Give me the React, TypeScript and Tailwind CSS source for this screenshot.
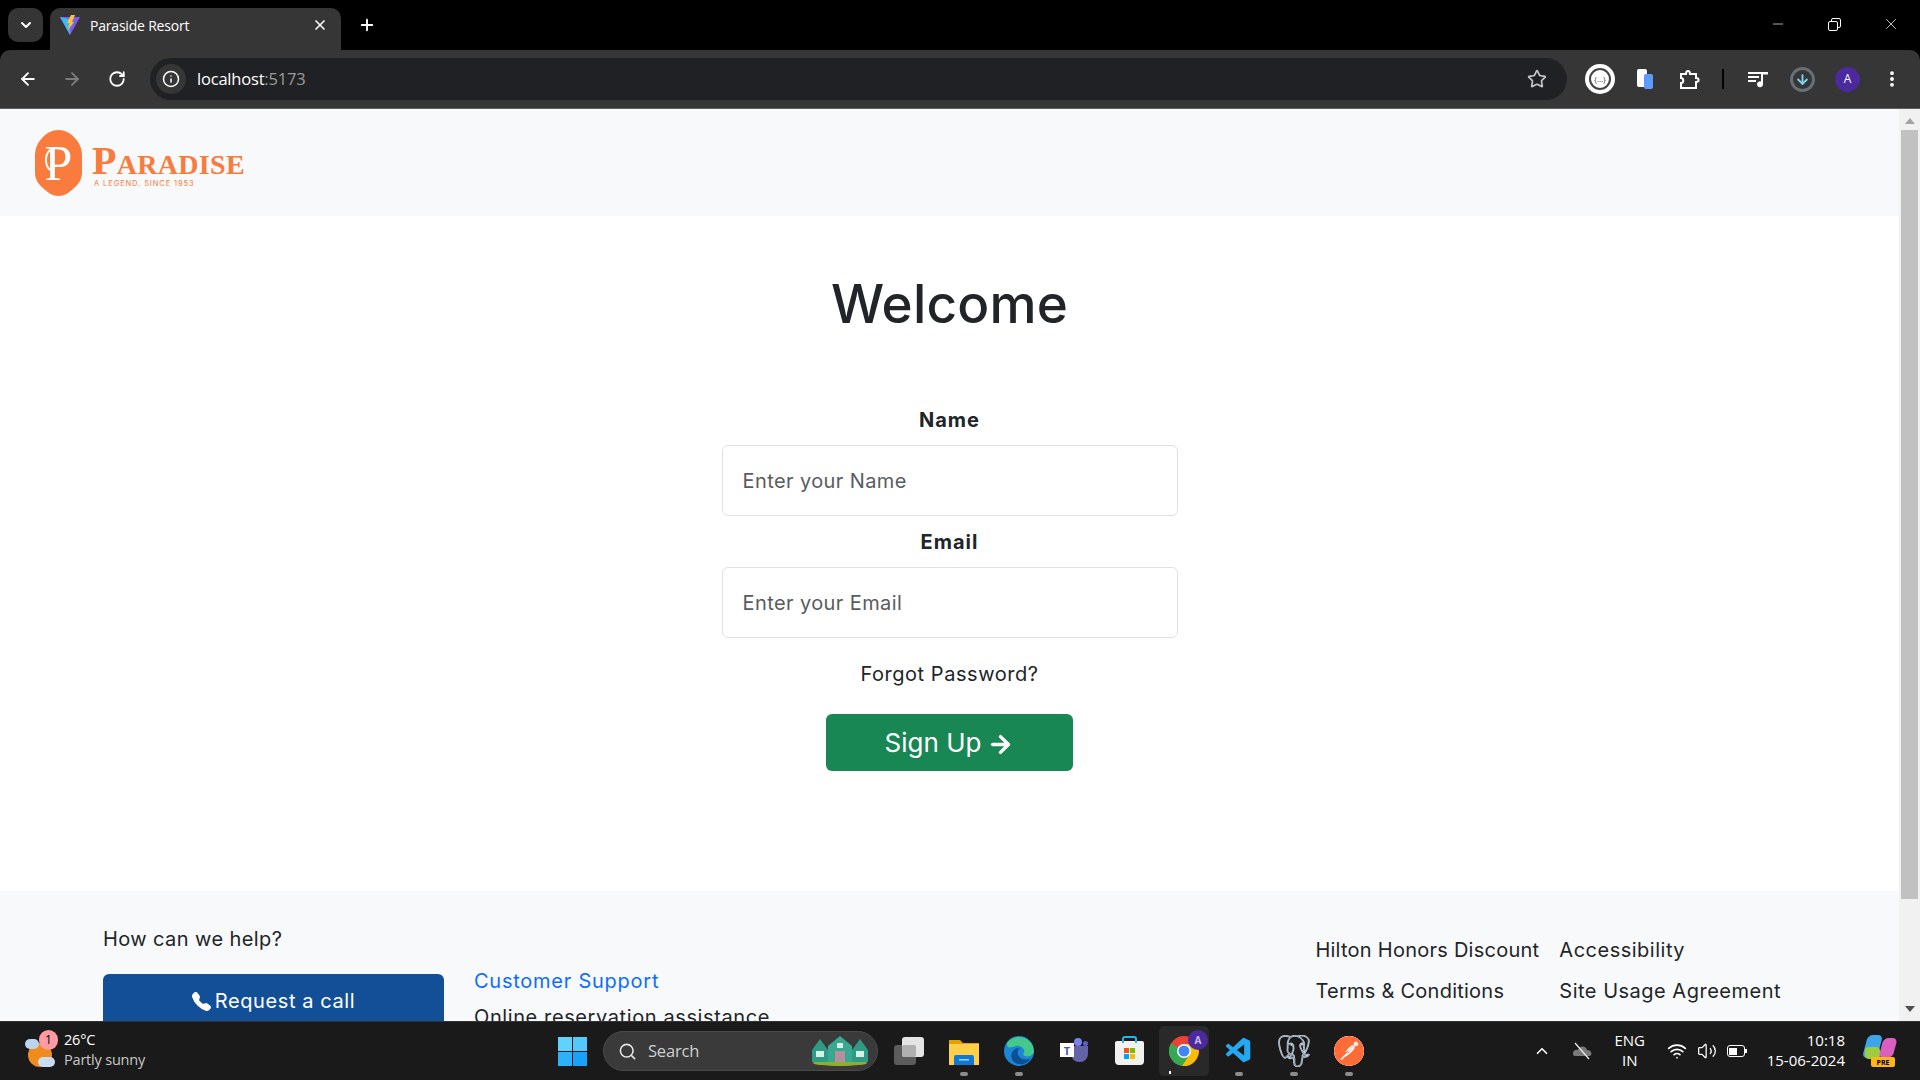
import { ArrowLeft, ArrowRight, ChevronDown, ChevronUp, EllipsisVertical, Info, Minus, Plus, RotateCw, Search, Star, Volume2, Wifi, X } from 'lucide-react';
import { BsTelephoneFill } from 'react-icons/bs';
import { SiPostgresql, SiPostman } from 'react-icons/si';
import { VscVscode } from 'react-icons/vsc';

const UI_FONT = "font-['Open_Sans','Noto_Sans',sans-serif]";

function ViteIcon() {
  return (
    <svg width="20" height="20" viewBox="0 0 20 20">
      <path d="M0 2 L20 2 L10 20 Z" fill="#7c5cf5" />
      <path d="M0 2 L9 4 L10 20 Z" fill="#41b6f5" />
      <path d="M11 0 L15 0 L12 7 L14 7 L8 15 L9.5 8 L7 8 Z" fill="#ffc62e" />
    </svg>
  );
}

function BrowserChrome() {
  return (
    <div className={'shrink-0 bg-black text-white ' + UI_FONT}>
      {/* Tab strip */}
      <div className="flex h-[50px] items-end pl-2">
        <div className="mb-2 flex h-[34px] w-[35px] items-center justify-center rounded-[10px] bg-[#353535]">
          <ChevronDown size={16} strokeWidth={3} />
        </div>
        <div className="ml-[7px] flex h-[42px] w-[291px] items-center rounded-t-[10px] bg-[#363636] pb-[8px] pl-[10px] pr-[13px]">
          <ViteIcon />
          <span className="ml-[10px] flex-1 text-[14px] tracking-[-0.2px]">Paraside Resort</span>
          <X size={16} strokeWidth={2.5} />
        </div>
        <div className="mb-[7px] ml-[8px] flex h-[36px] w-[36px] items-center justify-center">
          <Plus size={18} strokeWidth={2.5} />
        </div>
        <div className="mb-[8px] ml-auto flex h-[36px] items-center pr-[20px]">
          <Minus size={16} strokeWidth={1} />
          <div className="relative ml-[42px] h-[12px] w-[12px]">
            <div className="absolute left-[3px] top-0 h-[10px] w-[10px] rounded-[2px] border border-white" />
            <div className="absolute bottom-[-1px] left-0 h-[10px] w-[10px] rounded-[2px] border border-white bg-black" />
          </div>
          <X size={18} strokeWidth={1} className="ml-[42px]" />
        </div>
      </div>
      {/* Toolbar */}
      <div className="flex h-[59px] items-center rounded-t-[10px] border-b border-[#5f5f5f] bg-[#363636] pl-[18px]">
        <ArrowLeft size={20} strokeWidth={2.2} />
        <ArrowRight size={20} strokeWidth={2.2} className="ml-[24px] text-[#7d7d7d]" />
        <RotateCw size={18} strokeWidth={2.4} className="ml-[26px]" />
        <div className="ml-[24px] flex h-[42px] w-[1417px] items-center rounded-full bg-[#202124] pl-[6px] pr-[20px]">
          <div className="flex h-[30px] w-[30px] items-center justify-center rounded-full bg-[#363636]">
            <Info size={18} strokeWidth={2} />
          </div>
          <span className="ml-[11px] flex-1 text-[16.5px] tracking-[-0.2px]">
            localhost<span className="text-[#9a9a9a]">:5173</span>
          </span>
          <Star size={20} strokeWidth={2} className="text-[#c7c7c7]" />
        </div>
        <div className="ml-[18px] flex h-[30px] w-[30px] items-center justify-center rounded-full bg-white">
          <div className="flex h-[22px] w-[22px] items-center justify-center rounded-full border-2 border-[#444] text-[8px] leading-none text-[#444]">{'{…}'}</div>
        </div>
        <div className="relative ml-[22px] h-[20px] w-[16px]">
          <div className="absolute left-0 top-0 h-[18px] w-[10px] rounded-[2px] bg-white" />
          <div className="absolute bottom-0 right-0 h-[15px] w-[9px] rounded-[2px] bg-[#5e9bff]" />
        </div>
        <svg className="ml-[25px]" width="22" height="22" viewBox="0 0 22 22" fill="none" stroke="#fff" strokeWidth="2">
          <path d="M3 6 H8 C8 2 12 2 12 6 H18 V10 C21.5 10 21.5 14 18 14 V20 H3 V15 C6 15 6 10 3 10 Z" />
        </svg>
        <div className="ml-[22px] h-[20px] w-[2px] bg-black" />
        <svg className="ml-[24px]" width="20" height="20" viewBox="0 0 20 20" fill="#fff">
          <path d="M0 3 H13 V5 H0 Z M0 7 H11 V9 H0 Z M0 11 H8 V13 H0 Z" />
          <path d="M13 3 H20 V5.5 H15 V15 A3 3 0 1 1 13 12.5 Z" />
        </svg>
        <div className="ml-[22px] flex h-[25px] w-[25px] items-center justify-center rounded-full border-[3px] border-[#667078]">
          <ArrowRight size={15} strokeWidth={3} className="rotate-90 text-[#7fd3ec]" />
        </div>
        <div className="ml-[20px] flex h-[25px] w-[25px] items-center justify-center rounded-full bg-[#4a2a9c] text-[12px]">A</div>
        <EllipsisVertical size={20} strokeWidth={2.6} className="ml-[22px]" />
      </div>
    </div>
  );
}

function Logo() {
  return (
    <div className="flex items-center">
      <div className="relative flex h-[66px] w-[47px] items-center justify-center">
        <svg className="absolute inset-0" width="47" height="66" viewBox="0 0 47 66">
          <path d="M23.5 0 C30 0 35 3 39 7 C44 12 47 18 47 26 V42 C47 49 44 54 39 58 C34 63 29 66 23.5 66 C18 66 13 63 8 58 C3 54 0 49 0 42 V26 C0 18 3 12 8 7 C12 3 17 0 23.5 0 Z" fill="#f97b3d" />
          <path d="M15 20 A9 12 0 0 0 15 40" fill="none" stroke="#fff" strokeWidth="2" />
        </svg>
        <span className="relative font-['Liberation_Serif',serif] text-[50px] leading-none text-white">P</span>
      </div>
      <div className="ml-[10px] mt-[6px] flex flex-col text-[#f97b3d]">
        <span className="font-['Liberation_Serif',serif] text-[40px] font-bold leading-[36px] tracking-[0.3px] [font-variant:small-caps]">Paradise</span>
        <span className="ml-[2px] font-['Inter',sans-serif] text-[7.5px] leading-[10px] tracking-[0.9px]">A LEGEND. SINCE 1953</span>
      </div>
    </div>
  );
}

function Field({ label, placeholder }: { label: string; placeholder: string }) {
  return (
    <div className="flex w-[456px] flex-col items-center">
      <label className="mb-[10px] text-[20px] font-bold leading-[30px] tracking-[1px] text-[#212529]">{label}</label>
      <input
        placeholder={placeholder}
        className="h-[71px] w-full rounded-[6px] border border-[#dee2e6] bg-white px-[20px] text-[20px] tracking-[0.4px] text-[#212529] placeholder:text-[#595c5f]"
      />
    </div>
  );
}

function FooterLink({ children, className }: { children: string; className: string }) {
  return <a className={'text-[20px] leading-[30px] text-[#212529] ' + className}>{children}</a>;
}

function Page() {
  return (
    <div className="flex min-h-0 flex-1 bg-white">
      <div className="min-w-0 flex-1 overflow-hidden font-['Inter',sans-serif] text-[#212529]">
        <header className="flex h-[107px] items-center bg-[#f8f9fa] pl-[35px]">
          <Logo />
        </header>
        <main className="flex h-[675px] flex-col items-center">
          <h1 className="mt-[48px] text-[53px] font-medium leading-[80px] tracking-[0.2px]">Welcome</h1>
          <div className="mt-[61px] flex flex-col items-center">
            <Field label="Name" placeholder="Enter your Name" />
            <div className="mt-[11px]">
              <Field label="Email" placeholder="Enter your Email" />
            </div>
          </div>
          <a className="mt-[21px] text-[20px] leading-[30px] tracking-[0.55px]">Forgot Password?</a>
          <button className="mt-[25px] flex h-[57px] w-[247px] items-center justify-center gap-[6px] rounded-[6px] bg-[#198754] text-[26px] text-white">
            Sign Up
            <ArrowRight size={27} strokeWidth={3} className="mt-[3px]" />
          </button>
        </main>
        <footer className="flex h-[200px] bg-[#f8f9fa] pl-[103px] pr-[118px] pt-[33px]">
          <div className="w-[341px]">
            <p className="text-[20px] leading-[30px] tracking-[0.4px]">How can we help?</p>
            <button className="mt-[20px] flex h-[58px] w-[341px] items-center justify-center gap-[4px] rounded-[6px] bg-[#134f97] pb-[4px] text-[20px] tracking-[0.6px] text-white">
              <BsTelephoneFill size={19} />
              Request a call
            </button>
          </div>
          <div className="ml-[30px] pt-[42px]">
            <a className="block text-[20px] leading-[30px] tracking-[0.75px] text-[#0d6efd]">Customer Support</a>
            <p className="mt-[6px] text-[20px] leading-[30px] tracking-[0.6px]">Online reservation assistance</p>
          </div>
          <div className="ml-auto grid grid-cols-[auto_auto] content-start gap-x-[20px] gap-y-[11px] pt-[11px]">
            <FooterLink className="tracking-[0.25px]">Hilton Honors Discount</FooterLink>
            <FooterLink className="tracking-[0.5px]">Accessibility</FooterLink>
            <FooterLink className="tracking-[0.25px]">Terms & Conditions</FooterLink>
            <FooterLink className="tracking-[0.5px]">Site Usage Agreement</FooterLink>
          </div>
        </footer>
      </div>
      {/* Scrollbar */}
      <div className="flex w-[21px] shrink-0 flex-col items-center bg-[#f1f1f1]">
        <div className="mt-[9px] h-0 w-0 border-x-[5px] border-b-[6px] border-x-transparent border-b-[#a3a3a3]" />
        <div className="mt-[6px] h-[769px] w-[17px] bg-[#c1c1c1]" />
        <div className="mt-auto mb-[9px] h-0 w-0 border-x-[5px] border-t-[6px] border-x-transparent border-t-[#505050]" />
      </div>
    </div>
  );
}

function ChromeIcon() {
  return (
    <svg width="30" height="30" viewBox="0 0 30 30">
      <circle cx="15" cy="15" r="15" fill="#ea4335" />
      <path d="M15 15 L2 7.5 A15 15 0 0 0 15 30 L21 19 Z" fill="#34a853" />
      <path d="M15 8 H28 A15 15 0 0 1 13 30 L21 18 Z" fill="#fbbc04" />
      <circle cx="15" cy="15" r="7" fill="#fff" />
      <circle cx="15" cy="15" r="5.5" fill="#4285f4" />
    </svg>
  );
}

function TaskbarItem({ running, children, className }: { running?: boolean; children: React.ReactNode; className?: string }) {
  return (
    <div className={'relative flex h-[50px] w-[50px] items-center justify-center rounded-[5px] ' + (className ?? '')}>
      {children}
      {running && <div className="absolute bottom-0 h-[4px] w-[8px] rounded-full bg-[#8c8c8c]" />}
    </div>
  );
}

function Taskbar() {
  return (
    <div className={'flex h-[59px] shrink-0 items-center border-t border-[#333] bg-[#1a1a1a] text-white ' + UI_FONT}>
      {/* Weather */}
      <div className="flex w-[558px] items-center pl-[25px]">
        <div className="relative h-[36px] w-[32px]">
          <div className="absolute left-[3px] top-[10px] h-[24px] w-[24px] rounded-full bg-[#f08c1e]" />
          <div className="absolute left-0 top-[6px] h-[10px] w-[14px] rounded-full bg-[#bcd5ee]" />
          <div className="absolute bottom-[2px] left-[13px] h-[10px] w-[17px] rounded-full bg-[#c9dcf2]" />
          <div className="absolute left-[14px] top-[-3px] flex h-[20px] w-[19px] items-center justify-center rounded-full bg-[#ff9aa2] text-[12px] text-black">1</div>
        </div>
        <div className="mb-[2px] ml-[7px] flex flex-col text-[14.5px] leading-[20px] tracking-[-0.2px]">
          <span>26°C</span>
          <span className="text-[#c9c9c9]">Partly sunny</span>
        </div>
      </div>
      {/* Start + search */}
      <div className="grid h-[29px] w-[29px] shrink-0 grid-cols-2 gap-[1px]">
        <div className="bg-[#5fd3fb]" />
        <div className="bg-[#54c8fb]" />
        <div className="bg-[#2eb0fb]" />
        <div className="bg-[#18a2fb]" />
      </div>
      <div className="ml-[16px] flex h-[40px] w-[275px] shrink-0 items-center rounded-full border border-[#4a4a4a] bg-[#3a3a3a] pl-[14px] pr-[8px]">
        <Search size={19} strokeWidth={2} className="text-[#e6e6e6]" />
        <span className="ml-[11px] flex-1 text-[16.5px] tracking-[-0.2px] text-[#d0d0d0]">Search</span>
        <svg width="58" height="30" viewBox="0 0 58 30">
          <ellipse cx="29" cy="27" rx="27" ry="3" fill="#8fae2e" />
          <path d="M1 26 V14 L9 3 L17 14 V26 Z M41 26 V14 L49 3 L57 14 V26 Z" fill="#2f9b84" />
          <path d="M17 26 V10 L29 0 L41 10 V26 Z" fill="#39a890" />
          <path d="M24 26 V15 H34 V26 Z" fill="#b78f9a" />
          <path d="M5 15 H13 V21 H5 Z M45 15 H53 V21 H45 Z M26 7 H32 V12 H26 Z" fill="#d8efe8" />
        </svg>
      </div>
      <div className="ml-[6px] flex items-center gap-[5px]">
        <TaskbarItem>
          <div className="relative h-[28px] w-[30px]">
            <div className="absolute bottom-0 left-0 h-[20px] w-[22px] rounded-[3px] bg-[#5c5c5c]" />
            <div className="absolute left-[8px] top-0 h-[20px] w-[22px] rounded-[3px] bg-[#e4e4e4]" />
            <div className="absolute bottom-[8px] left-[8px] h-[12px] w-[14px] rounded-[2px] bg-[#b0b0b0]" />
          </div>
        </TaskbarItem>
        <TaskbarItem running>
          <svg width="30" height="27" viewBox="0 0 30 27">
            <path d="M0 2 H11 L14 5 H30 V27 H0 Z" fill="#e3a008" />
            <path d="M0 6 H30 V27 H0 Z" fill="#ffcf4a" />
            <path d="M5 27 V19 Q5 17 7 17 H23 Q25 17 25 19 V27 Z" fill="#0f78d4" />
            <rect x="10" y="21" width="10" height="1.5" fill="#9fd5ff" />
          </svg>
        </TaskbarItem>
        <TaskbarItem running>
          <svg width="30" height="30" viewBox="0 0 30 30">
            <circle cx="15" cy="15" r="15" fill="#1b86d6" />
            <path d="M3 7 A15 15 0 0 1 30 15 C30 21 20 22 19 18 C23 14 17 9 12 10 C7 11 3 14 3 7 Z" fill="#45c98a" />
            <path d="M10 26 C4 20 9 11 16 12 C13 14 12 21 19 23 C23 24 26 23 27 22 C23 29 15 30 10 26 Z" fill="#0c4f94" />
          </svg>
        </TaskbarItem>
        <TaskbarItem>
          <div className="relative h-[26px] w-[28px]">
            <div className="absolute right-0 top-[8px] h-[16px] w-[17px] rounded-b-[8px] bg-[#6264a7]" />
            <div className="absolute right-[6px] top-0 h-[8px] w-[8px] rounded-full bg-[#7b83eb]" />
            <div className="absolute right-0 top-[3px] h-[5px] w-[5px] rounded-full bg-[#5b5fc7]" />
            <div className="absolute left-0 top-[5px] flex h-[14px] w-[14px] items-center justify-center bg-white text-[11px] font-bold leading-none text-[#4b53bc]">T</div>
          </div>
        </TaskbarItem>
        <TaskbarItem>
          <div className="relative mt-[3px] h-[24px] w-[29px] rounded-b-[4px] rounded-t-[2px] bg-[#f1f1f1]">
            <div className="absolute left-[7px] top-[-5px] h-[7px] w-[15px] rounded-t-[3px] border-x-2 border-t-2 border-[#27b5e8]" />
            <div className="absolute left-[9px] top-[7px] grid h-[11px] w-[11px] grid-cols-2 gap-[1px]">
              <div className="bg-[#f25022]" />
              <div className="bg-[#7fba00]" />
              <div className="bg-[#00a4ef]" />
              <div className="bg-[#ffb900]" />
            </div>
          </div>
        </TaskbarItem>
        <TaskbarItem className="bg-[#292929]">
          <ChromeIcon />
          <div className="absolute right-[1px] top-[4px] flex h-[20px] w-[20px] items-center justify-center rounded-full bg-[#4a2a9c] text-[10px] font-bold text-[#c9b8f0]">A</div>
          <div className="absolute bottom-[2px] left-[10px] h-[3px] w-[2px] bg-white" />
        </TaskbarItem>
        <TaskbarItem running>
          <VscVscode size={30} color="#23a9f2" />
        </TaskbarItem>
        <TaskbarItem running>
          <SiPostgresql size={32} color="#3a6f9f" stroke="#ffffff" strokeWidth={0.5} />
        </TaskbarItem>
        <TaskbarItem running>
          <div className="flex h-[30px] w-[30px] items-center justify-center rounded-full bg-[#ff6c37]">
            <SiPostman size={30} color="#ff6c37" className="rounded-full bg-white" />
          </div>
        </TaskbarItem>
      </div>
      {/* Tray */}
      <div className="ml-auto flex items-center pr-[25px]">
        <ChevronUp size={18} strokeWidth={2.2} />
        <svg className="ml-[21px]" width="20" height="18" viewBox="0 0 20 18">
          <path d="M2 14 C-1 10 3 7 6 8 C8 3 14 4 15 8 C19 8 21 12 18 14 Z" fill="#7a7a7a" />
          <path d="M3 1 L17 17" stroke="#e8e8e8" strokeWidth="1.3" />
        </svg>
        <div className="mb-[2px] ml-[20px] flex w-[36px] flex-col items-center text-[15px] leading-[20px]">
          <span>ENG</span>
          <span>IN</span>
        </div>
        <Wifi size={20} strokeWidth={2} className="ml-[19px]" />
        <Volume2 size={20} strokeWidth={1.5} className="ml-[10px]" />
        <div className="ml-[10px] flex items-center">
          <div className="h-[12px] w-[18px] rounded-[3px] border-[1.5px] border-white p-[1.5px]">
            <div className="h-full w-[8px] bg-white" />
          </div>
          <div className="h-[4px] w-[2px] bg-white" />
        </div>
        <div className="mb-[3px] ml-[20px] flex flex-col items-end text-[15px] leading-[20px]">
          <span>10:18</span>
          <span>15-06-2024</span>
        </div>
        <div className="relative ml-[20px] h-[32px] w-[30px]">
          <div className="absolute left-0 top-0 h-[23px] w-[15px] skew-x-[-15deg] rounded-[5px] bg-[#3ea6e8]" />
          <div className="absolute bottom-[8px] left-[0px] h-[12px] w-[15px] rounded-[4px] bg-[#9ccd3f]" />
          <div className="absolute right-0 top-[3px] h-[20px] w-[14px] skew-x-[-15deg] rounded-[5px] bg-[#d95fc0]" />
          <div className="absolute bottom-0 right-0 flex h-[10px] w-[24px] items-center justify-center rounded-[2px] bg-[#fdb813] text-[7px] font-bold leading-none text-black">PRE</div>
        </div>
      </div>
    </div>
  );
}

export default function App() {
  return (
    <div className="flex h-screen flex-col overflow-hidden">
      <BrowserChrome />
      <Page />
      <Taskbar />
    </div>
  );
}
